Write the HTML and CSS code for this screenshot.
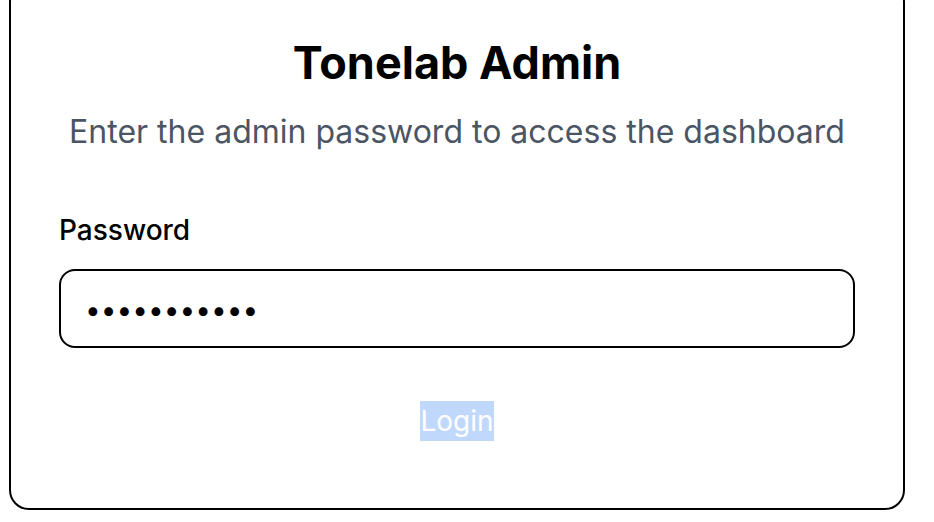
FILE: index.html
```html
<!DOCTYPE html>
<html lang="en">
<head>
<meta charset="utf-8">
<title>Tonelab Admin</title>
<link rel="stylesheet" href="styles.css">
</head>
<body>
<main class="page">
  <section class="card">
    <h1 class="title">Tonelab Admin</h1>
    <p class="subtitle">Enter the admin password to access the dashboard</p>
    <form class="form">
      <label class="label" for="pw">Password</label>
      <input class="input" id="pw" type="password" value="supersecret">
      <button class="button" type="button"><span class="button-text">Login</span></button>
    </form>
  </section>
</main>
</body>
</html>
```
FILE: styles.css
```css
* { box-sizing: border-box; }
html, body {
  margin: 0;
  padding: 0;
  background: #ffffff;
  overflow: hidden;
}
body {
  font-family: Inter, "Noto Sans", "Liberation Sans", sans-serif;
  color: #000000;
}
.page {
  display: flex;
  padding-left: 9px;
}
.card {
  width: 896px;
  margin-top: -18px;
  border: 2px solid #000000;
  border-radius: 20px;
  padding: 54px 48px 55px;
  display: flex;
  flex-direction: column;
  align-items: stretch;
}
.title {
  margin: 0;
  font-size: 45px;
  line-height: 50px;
  font-weight: 700;
  text-align: center;
}
.subtitle {
  margin: 24px 0 0;
  font-size: 32px;
  line-height: 40px;
  color: #4b5563;
  text-align: center;
}
.form {
  margin-top: 60px;
  display: flex;
  flex-direction: column;
}
.label {
  font-size: 28px;
  line-height: 36px;
  font-weight: 500;
}
.input {
  margin-top: 21px;
  height: 79px;
  width: 100%;
  border: 2px solid #000000;
  border-radius: 16px;
  padding: 2px 24px 0;
  font-family: Inter, "Noto Sans", sans-serif;
  font-size: 28px;
  color: #000000;
  outline: none;
  background: #ffffff;
}
.button {
  margin-top: 41px;
  align-self: center;
  padding: 12px 0;
  border: none;
  background: transparent;
  font-family: Inter, "Noto Sans", sans-serif;
  font-size: 28px;
  line-height: 40px;
  color: #ffffff;
}
.button-text {
  display: inline-block;
  background: #bfd8fb;
  line-height: 40px;
}
```
